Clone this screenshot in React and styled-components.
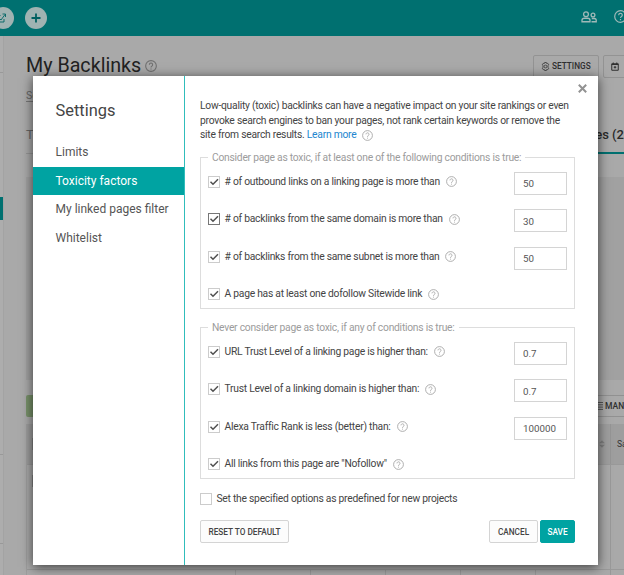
import { useState } from "react";
import styled, { createGlobalStyle } from "styled-components";

const MENU = ["Limits", "Toxicity factors", "My linked pages filter", "Whitelist"];

const TOXIC = [
  { id: "outbound", label: "# of outbound links on a linking page is more than", value: "50" },
  { id: "domain", label: "# of backlinks from the same domain is more than", value: "30", focused: true },
  { id: "subnet", label: "# of backlinks from the same subnet is more than", value: "50" },
  { id: "sitewide", label: "A page has at least one dofollow Sitewide link" },
];

const NOT_TOXIC = [
  { id: "url", label: "URL Trust Level of a linking page is higher than:", value: "0.7" },
  { id: "trust", label: "Trust Level of a linking domain is higher than:", value: "0.7" },
  { id: "alexa", label: "Alexa Traffic Rank is less (better) than:", value: "100000" },
  { id: "nofollow", label: 'All links from this page are "Nofollow"' },
];

const COLUMNS = [209, 75, 75, 75, 75, 75];

const HelpIcon = ({ size = 11, color = "#a6a6a6", width = 1.8 }) => (
  <Icon width={size} height={size} viewBox="0 0 22 22" stroke={color} strokeWidth={width}>
    <circle cx="11" cy="11" r="9.8" />
    <path d="M8 8.7a3 3 0 1 1 4.6 2.5c-1.1.7-1.6 1.2-1.6 2.5M11 15.4v1.8" />
  </Icon>
);

const GearIcon = () => (
  <Icon width="9" height="9" viewBox="0 0 18 18" stroke="#383838" strokeWidth="1.6">
    <path d="M7.2 1h3.6l.6 2.2 2.1-.6 2 3.1L14 7.3v3.4l1.5 1.6-2 3.1-2.1-.6-.6 2.2H7.2l-.6-2.2-2.1.6-2-3.1L4 10.7V7.3L2.5 5.7l2-3.1 2.1.6z" />
    <circle cx="9" cy="9" r="2.8" />
  </Icon>
);

const CalendarIcon = () => (
  <Icon width="8" height="9" viewBox="0 0 16 18" stroke="#303030" strokeWidth="2">
    <path d="M1.5 3.5h13v13h-13zM1.5 5h13M4.5 1v3M11.5 1v3" />
    <path d="M8 8v5M5.5 10.5h5" />
  </Icon>
);

const UsersIcon = () => (
  <Icon width="16" height="12" viewBox="0 0 32 24" stroke="#a0b9b8" strokeWidth="2.6">
    <circle cx="10" cy="6.5" r="4.8" />
    <circle cx="24" cy="8" r="3.8" />
    <path d="M2 21.5v-3q0-4 5-4h6q5 0 5 4v3zM21 21.5h9.5v-2.5q0-4-4-4h-5" />
  </Icon>
);

const Tick = () => (
  <Icon width="10" height="10" viewBox="0 0 20 20" stroke="#505050" strokeWidth="3">
    <path d="M3 9.5l5 5L18 4.5" />
  </Icon>
);

function Factor({ label, value, focused }) {
  const [checked, setChecked] = useState(true);
  const [amount, setAmount] = useState(value);

  return (
    <FactorRow>
      <Check type="button" $focused={focused} onClick={() => setChecked(!checked)}>
        {checked && <Tick />}
      </Check>
      <FactorLabel>{label}</FactorLabel>
      <HelpIcon />
      {value && <Input value={amount} onChange={(e) => setAmount(e.target.value)} />}
    </FactorRow>
  );
}

export default function App() {
  const [active, setActive] = useState("Toxicity factors");
  const [predefined, setPredefined] = useState(false);

  return (
    <Screen>
      <GlobalStyle />
      <TopBar>
        <RoundButton $first>
          <Icon width="9" height="10" viewBox="0 0 18 20" stroke="#006565" strokeWidth="1.8">
            <path d="M7 5H1v13h13v-6M4 10l4 4 8-11M11 2h6v6" />
          </Icon>
        </RoundButton>
        <RoundButton>
          <Icon width="10" height="10" viewBox="0 0 10 10" stroke="#006060" strokeWidth="1.8">
            <path d="M5 .5v9M.5 5h9" />
          </Icon>
        </RoundButton>
        <TopIcons>
          <UsersIcon />
          <HelpIcon size={13} color="#a0b9b8" width={2} />
        </TopIcons>
      </TopBar>
      <Body>
        <Rail>
          <RailBlock $h={37} />
          <RailBlock $h={124} $plain />
          <RailMark />
          <RailBlock $h={235} />
          <RailBlock $h={89} />
        </Rail>
        <Page>
          <PageHead>
            <PageTitle>My Backlinks</PageTitle>
            <HelpIcon size={12} color="#707070" width={2} />
            <HeadButtons>
              <HeadButton $w={66}><GearIcon />SETTINGS</HeadButton>
              <HeadButton $w={30}><CalendarIcon /></HeadButton>
            </HeadButtons>
          </PageHead>
          <SubTitle><span>Se</span></SubTitle>
          <Tabs>
            <Tab>T</Tab>
            <Tab $active>es (2</Tab>
          </Tabs>
          <Chart />
          <Actions>
            <AddButton />
            <ManageButton>
              <Icon width="8" height="8" viewBox="0 0 8 8" stroke="#555" strokeWidth="1">
                <path d="M0 .5h1.5M2.5 .5H8M0 2.8h1.5M2.5 2.8H8M0 5.1h1.5M2.5 5.1H8M0 7.4h1.5M2.5 7.4H8" />
              </Icon>
              MAN
            </ManageButton>
          </Actions>
          <Table>
            <TableHead>
              <GhostCheck />
              <Sort>
                <Icon width="6" height="8" viewBox="0 0 6 8">
                  <path d="M0 3.3L3 .3l3 3zM0 4.7h6l-3 3z" fill="#808080" />
                </Icon>
              </Sort>
              <HeadCell>Sa</HeadCell>
            </TableHead>
            <TableRow><GhostCheck /><LastCell /></TableRow>
            <TableCells>
              {COLUMNS.map((w, i) => <Cell key={i} $w={w} />)}
            </TableCells>
          </Table>
        </Page>
      </Body>
      <Modal>
        <Menu>
          <MenuTitle>Settings</MenuTitle>
          {MENU.map((item) => (
            <MenuItem key={item} $active={item === active} onClick={() => setActive(item)}>
              {item}
            </MenuItem>
          ))}
        </Menu>
        <Content>
          <Close type="button">
            <Icon width="9" height="9" viewBox="0 0 9 9" stroke="#929292" strokeWidth="2">
              <path d="M.8 .8l7.4 7.4M8.2 .8L.8 8.2" />
            </Icon>
          </Close>
          <Intro>
            Low-quality (toxic) backlinks can have a negative impact on your site rankings or even<br />
            provoke search engines to ban your pages, not rank certain keywords or remove the<br />
            <IntroLine>site from search results. <a>Learn more</a><HelpIcon /></IntroLine>
          </Intro>
          <Group>
            <Legend>Consider page as toxic, if at least one of the following conditions is true:</Legend>
            {TOXIC.map((f) => <Factor key={f.id} {...f} />)}
          </Group>
          <Group>
            <Legend>Never consider page as toxic, if any of conditions is true:</Legend>
            {NOT_TOXIC.map((f) => <Factor key={f.id} {...f} />)}
          </Group>
          <Predefined>
            <Check type="button" onClick={() => setPredefined(!predefined)}>
              {predefined && <Tick />}
            </Check>
            <FactorLabel>Set the specified options as predefined for new projects</FactorLabel>
          </Predefined>
          <Footer>
            <Button $w={89}>RESET TO DEFAULT</Button>
            <Spacer />
            <Button $w={49}>CANCEL</Button>
            <Button $w={35} $primary>SAVE</Button>
          </Footer>
        </Content>
      </Modal>
    </Screen>
  );
}

// Styled Components
const GlobalStyle = createGlobalStyle`
  * {
    box-sizing: border-box;
  }
  body {
    margin: 0;
    overflow: hidden;
    font-family: Roboto, sans-serif;
  }
  button, input {
    font-family: inherit;
  }
`;
const Icon = styled.svg`
  fill: none;
  flex: none;
  display: block;
`;
const Screen = styled.div`
  position: relative;
  width: 624px;
  height: 575px;
  overflow: hidden;
  background-color: #a9a9a9;
`;
const TopBar = styled.div`
  display: flex;
  align-items: center;
  height: 36px;
  background-color: #007070;
`;
const RoundButton = styled.div`
  display: flex;
  flex: none;
  align-items: center;
  justify-content: center;
  width: 22px;
  height: 22px;
  margin-left: ${(props) => (props.$first ? "-8px" : "11px")};
  padding-right: ${(props) => (props.$first ? "3px" : "0")};
  border-radius: 50%;
  background-color: #a0b3b2;
`;
const TopIcons = styled.div`
  display: flex;
  align-items: center;
  gap: 17px;
  width: 43px;
  margin-left: auto;
  padding-bottom: 3px;
`;
const Body = styled.div`
  display: flex;
  height: 539px;
`;
const Rail = styled.div`
  flex: none;
  width: 4px;
  border-right: 1px solid #a3a3a3;
  background-color: #adadad;
`;
const RailBlock = styled.div`
  height: ${(props) => props.$h}px;
  border-bottom: ${(props) => (props.$plain ? "none" : "1px solid #999")};
`;
const RailMark = styled.div`
  height: 23px;
  background-color: #007070;
`;
const Page = styled.div`
  flex: 1;
  min-width: 0;
  padding: 19px 0 0 22px;
`;
const PageHead = styled.div`
  display: flex;
  align-items: center;
  height: 22px;
`;
const PageTitle = styled.h1`
  margin: 0 4px 0 0;
  font-size: 19.7px;
  font-weight: 400;
  line-height: 22px;
  color: #222;
`;
const HeadButtons = styled.div`
  display: flex;
  gap: 4px;
  margin-left: auto;
  margin-right: -9px;
`;
const HeadButton = styled.div`
  display: flex;
  flex: none;
  align-items: center;
  gap: 2px;
  width: ${(props) => props.$w}px;
  height: 23px;
  padding-left: 7px;
  border: 1px solid #939393;
  border-radius: 2px;
  font-size: 8.25px;
  font-weight: 500;
  color: #303030;
`;
const SubTitle = styled.div`
  height: 49px;
  padding-top: 12px;
  font-size: 10.5px;
  color: #666;

  span {
    display: inline-block;
    height: 13px;
    border-bottom: 1px solid #777;
  }
`;
const Tabs = styled.div`
  display: flex;
  justify-content: space-between;
  height: 28px;
  border-bottom: 1px solid #959595;
`;
const Tab = styled.div`
  height: 28px;
  padding-right: ${(props) => (props.$active ? "0" : "30px")};
  border-bottom: ${(props) => (props.$active ? "2px solid #007070" : "none")};
  font-size: 13px;
  font-weight: ${(props) => (props.$active ? 500 : 400)};
  line-height: 18px;
  white-space: nowrap;
  color: ${(props) => (props.$active ? "#2a2a2a" : "#666")};
`;
const Chart = styled.div`
  height: 203px;
  margin-top: 23px;
  background-color: #a1a1a1;
`;
const Actions = styled.div`
  display: flex;
  justify-content: space-between;
  margin-top: 15px;
`;
const AddButton = styled.div`
  width: 60px;
  height: 22px;
  border-radius: 2px;
  background-color: #78916a;
`;
const ManageButton = styled.div`
  display: flex;
  align-items: center;
  gap: 2px;
  width: 50px;
  height: 22px;
  margin-right: -21px;
  border: 1px solid #919191;
  border-width: 1px 0;
  font-size: 8.5px;
  font-weight: 500;
  color: #303030;
`;
const Table = styled.div`
  margin-top: 7px;
  border-left: 1px solid #9d9d9d;
`;
const TableHead = styled.div`
  display: flex;
  align-items: center;
  height: 41px;
  padding-left: 5px;
  border-bottom: 1px solid #999;
  background-color: #9e9e9e;
`;
const GhostCheck = styled.div`
  width: 12px;
  height: 12px;
  border: 1px solid #858585;
`;
const Sort = styled.div`
  margin-left: auto;
  padding-right: 5px;
`;
const HeadCell = styled.div`
  width: 14px;
  height: 40px;
  padding-left: 6px;
  border-left: 1px solid #959595;
  font-size: 8.5px;
  line-height: 40px;
  color: #333;
`;
const TableRow = styled.div`
  display: flex;
  justify-content: space-between;
  height: 105px;
  padding: 10px 0 0 5px;
  border-bottom: 1px solid #999;
`;
const LastCell = styled.div`
  width: 14px;
  height: 105px;
  margin-top: -10px;
  border-left: 1px solid #999;
`;
const TableCells = styled.div`
  display: flex;
  height: 10px;
`;
const Cell = styled.div`
  flex: none;
  width: ${(props) => props.$w}px;
  border-right: 1px solid #999;
`;
const Modal = styled.div`
  position: absolute;
  top: 76px;
  left: 33px;
  display: flex;
  width: 565px;
  height: 489px;
  background-color: #fff;
  box-shadow: 0 2px 11px rgba(0, 0, 0, 0.65);
`;
const Menu = styled.div`
  flex: none;
  width: 152px;
  padding-top: 23px;
  border-right: 1px solid #30bdbb;
`;
const MenuTitle = styled.h2`
  height: 39px;
  margin: 0;
  padding-left: 22.5px;
  font-size: 16.4px;
  font-weight: 400;
  line-height: 24px;
  color: #444;
`;
const MenuItem = styled.div`
  height: 28.5px;
  padding-left: 22.5px;
  font-size: 12px;
  line-height: 28px;
  white-space: nowrap;
  cursor: pointer;
  color: ${(props) => (props.$active ? "#fff" : "#555")};
  background-color: ${(props) => (props.$active ? "#00a3a2" : "transparent")};
`;
const Content = styled.div`
  position: relative;
  display: flex;
  flex: 1;
  flex-direction: column;
  min-width: 0;
  padding: 23px 23px 0 15px;
  font-size: 10.3px;
  letter-spacing: -0.25px;
`;
const Close = styled.button`
  position: absolute;
  top: 8px;
  right: 11px;
  padding: 0;
  border: none;
  background: none;
`;
const Intro = styled.div`
  height: 52px;
  line-height: 14.7px;
  white-space: nowrap;
  color: #444;
`;
const IntroLine = styled.span`
  display: flex;
  align-items: center;
  white-space: pre;

  a {
    margin-right: 6px;
    color: #2286cf;
  }
`;
const Group = styled.fieldset`
  flex: none;
  height: 158px;
  min-width: 0;
  margin: 0 0 12px;
  padding: 0 7px;
  border: 1px solid #ddd;
`;
const Legend = styled.legend`
  height: 13px;
  padding: 0 4px;
  line-height: 13px;
  white-space: nowrap;
  color: #9c9c9c;
`;
const FactorRow = styled.div`
  display: flex;
  align-items: center;
  height: 37.5px;
  padding-bottom: 2px;
`;
const Check = styled.button`
  display: flex;
  flex: none;
  align-items: center;
  justify-content: center;
  width: 12px;
  height: 12px;
  margin-right: 4.5px;
  padding: 0;
  border: 1px solid ${(props) => (props.$focused ? "#777" : "#ccc")};
  background-color: #fff;
`;
const FactorLabel = styled.span`
  margin-right: 6px;
  line-height: 14px;
  white-space: nowrap;
  color: #444;
`;
const Input = styled.input`
  width: 53px;
  height: 23px;
  margin: 3px 0 0 auto;
  padding: 1px 8px 0;
  border: 1px solid #d4d4d4;
  outline: none;
  font-size: 9.75px;
  color: #555;
`;
const Predefined = styled.div`
  display: flex;
  align-items: center;
  height: 14px;
  margin-top: 1px;
`;
const Footer = styled.div`
  display: flex;
  gap: 2px;
  margin-top: 14px;
`;
const Spacer = styled.div`
  flex: 1;
`;
const Button = styled.button`
  width: ${(props) => props.$w}px;
  height: 23px;
  padding: 0;
  border: 1px solid ${(props) => (props.$primary ? "#00a3a2" : "#d4d4d4")};
  border-radius: 2px;
  font-size: 8.25px;
  font-weight: 500;
  white-space: nowrap;
  color: ${(props) => (props.$primary ? "#fff" : "#444")};
  background-color: ${(props) => (props.$primary ? "#00a3a2" : "#fcfcfc")};
`;
